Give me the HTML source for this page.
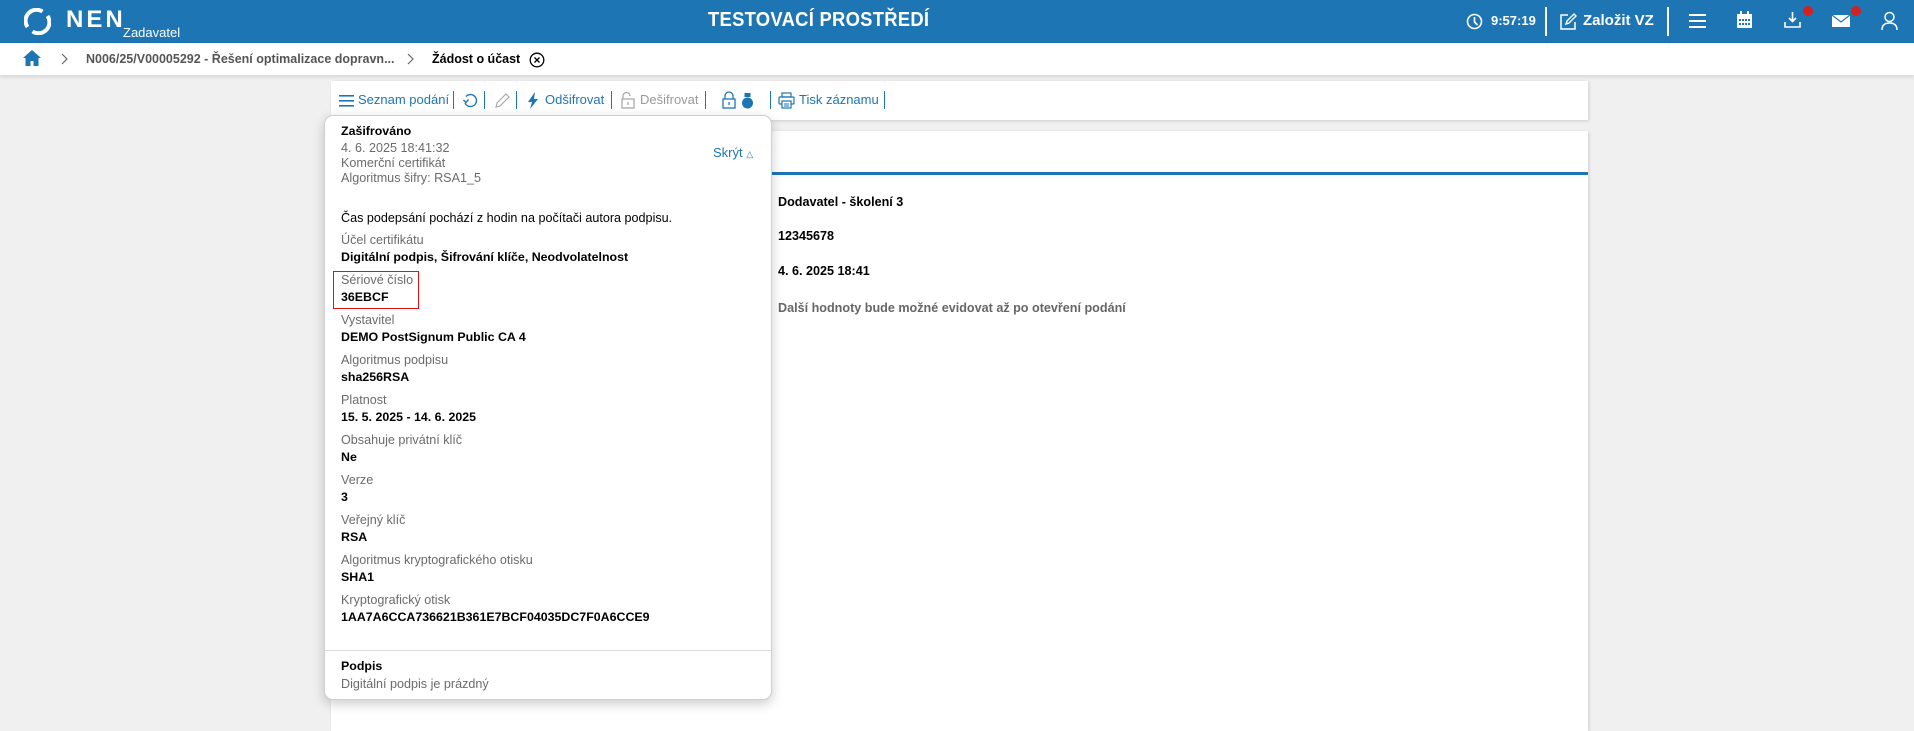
<!DOCTYPE html>
<html><head><meta charset="utf-8">
<style>
*{margin:0;padding:0;box-sizing:border-box}
body{width:1914px;height:722px;overflow:hidden;background:#f0f0f0;font-family:"Liberation Sans",sans-serif;position:relative;color:#000}
.a{position:absolute;white-space:nowrap}
.hdr{left:0;top:0;width:1914px;height:43px;background:#1e75b3}
.bc{left:0;top:43px;width:1914px;height:32px;background:#fff;box-shadow:0 2px 4px rgba(0,0,0,.12)}
.card{background:#fff;box-shadow:1px 1px 3px rgba(0,0,0,.15)}
.tb{font-size:13px;color:#1e75b3;top:92px}
.sep{width:1px;height:18px;background:#1e75b3;top:91px}
.pop{left:324px;top:115px;width:448px;height:585px;background:#fff;border:1px solid #cfcfcf;border-radius:9px;box-shadow:0 4px 12px rgba(0,0,0,.2)}
.l{font-size:12.6px;color:#6b6b6b;left:16px}
.v{font-size:12.4px;font-weight:bold;color:#000;left:16px}
.r{font-size:12.6px;font-weight:bold;left:778px}
</style></head><body>
<div class="a hdr"></div>
<svg class="a" style="left:24px;top:8px" width="27" height="27" viewBox="0 0 27 27"><path d="M18.5 3.5 A11 11 0 0 0 3.5 19" stroke="#fff" stroke-width="4" fill="none"/><path d="M8.5 23.5 A11 11 0 0 0 23.5 8" stroke="#fff" stroke-width="4" fill="none"/></svg>
<div class="a" style="left:66px;top:6px;font-size:24px;font-weight:bold;color:#fff;letter-spacing:3px">NEN</div>
<div class="a" style="left:123px;top:25px;font-size:13px;color:#fff">Zadavatel</div>
<div class="a" style="left:708px;top:9px;font-size:20px;font-weight:bold;color:#fff;letter-spacing:.3px;transform:scaleX(.92);transform-origin:left">TESTOVACÍ PROSTŘEDÍ</div>
<svg class="a" style="left:1466px;top:13px" width="17" height="17" viewBox="0 0 17 17"><circle cx="8.5" cy="8.5" r="7" stroke="#fff" stroke-width="1.6" fill="none"/><path d="M8.5 4v5l3 3" stroke="#fff" stroke-width="1.6" fill="none"/></svg>
<div class="a" style="left:1491px;top:13px;font-size:13px;font-weight:bold;color:#fff">9:57:19</div>
<div class="a" style="left:1545px;top:7px;width:2px;height:29px;background:#fff"></div>
<svg class="a" style="left:1559px;top:12px" width="19" height="19" viewBox="0 0 19 19"><path d="M9 3H2v14h14v-7" stroke="#fff" stroke-width="1.5" fill="none"/><path d="M7 12l1-3 7-7 2 2-7 7z" stroke="#fff" stroke-width="1.4" fill="none"/></svg>
<div class="a" style="left:1583px;top:12px;font-size:15px;font-weight:bold;color:#fff">Založit VZ</div>
<div class="a" style="left:1667px;top:7px;width:2px;height:29px;background:#fff"></div>
<svg class="a" style="left:1689px;top:13px" width="17" height="15"><rect y="1" width="17" height="2" fill="#fff"/><rect y="7" width="17" height="2" fill="#fff"/><rect y="13" width="17" height="2" fill="#fff"/></svg>
<svg class="a" style="left:1736px;top:11px" width="17" height="18" viewBox="0 0 17 18"><rect x="1" y="3" width="15" height="14" fill="#fff"/><rect x="4" y="0" width="2" height="5" fill="#fff"/><rect x="11" y="0" width="2" height="5" fill="#fff"/><g fill="#1e75b3"><rect x="3" y="8" width="2" height="2"/><rect x="6" y="8" width="2" height="2"/><rect x="9" y="8" width="2" height="2"/><rect x="12" y="8" width="2" height="2"/><rect x="3" y="12" width="2" height="2"/><rect x="6" y="12" width="2" height="2"/><rect x="9" y="12" width="2" height="2"/><rect x="12" y="12" width="2" height="2"/></g></svg>
<svg class="a" style="left:1784px;top:11px" width="17" height="18" viewBox="0 0 17 18"><path d="M8.5 1v9M5 7l3.5 3.5L12 7" stroke="#fff" stroke-width="1.6" fill="none"/><path d="M1 11v5h15v-5" stroke="#fff" stroke-width="1.6" fill="none"/></svg>
<div class="a" style="left:1803px;top:6px;width:10px;height:10px;border-radius:50%;background:#d32020"></div>
<svg class="a" style="left:1832px;top:15px" width="18" height="12" viewBox="0 0 18 12"><rect width="18" height="12" fill="#fff"/><path d="M0 0l9 7 9-7" stroke="#1e75b3" stroke-width="1.2" fill="none"/></svg>
<div class="a" style="left:1851px;top:6px;width:10px;height:10px;border-radius:50%;background:#d32020"></div>
<svg class="a" style="left:1881px;top:11px" width="17" height="19" viewBox="0 0 17 19"><circle cx="8.5" cy="6" r="4.5" stroke="#fff" stroke-width="1.5" fill="none"/><path d="M1 19c0-5 3-7 7.5-7s7.5 2 7.5 7" stroke="#fff" stroke-width="1.5" fill="none"/></svg>

<div class="a bc"></div>
<svg class="a" style="left:23px;top:50px" width="18" height="16" viewBox="0 0 18 16"><path d="M9 0L0 8h2.5v8h5v-5h3v5h5V8H18z" fill="#1e75b3"/></svg>
<svg class="a" style="left:61px;top:53px" width="7" height="12"><path d="M1 1l5 5-5 5" stroke="#666" stroke-width="1.2" fill="none"/></svg>
<div class="a" style="left:86px;top:52px;font-size:12.5px;font-weight:bold;color:#555">N006/25/V00005292 - Řešení optimalizace dopravn...</div>
<svg class="a" style="left:407px;top:53px" width="7" height="12"><path d="M1 1l5 5-5 5" stroke="#666" stroke-width="1.2" fill="none"/></svg>
<div class="a" style="left:432px;top:52px;font-size:12.5px;font-weight:bold">Žádost o účast</div>
<svg class="a" style="left:529px;top:52px" width="16" height="16" viewBox="0 0 16 16"><circle cx="8" cy="8" r="6.8" stroke="#000" stroke-width="1.3" fill="none"/><path d="M5.5 5.5l5 5M10.5 5.5l-5 5" stroke="#000" stroke-width="1.3"/></svg>

<div class="a card" style="left:331px;top:81px;width:1257px;height:39px"></div>
<div class="a card" style="left:331px;top:131px;width:1257px;height:600px"></div>
<div class="a" style="left:331px;top:172px;width:1257px;height:3px;background:#1e75b3"></div>

<svg class="a" style="left:339px;top:95px" width="15" height="12"><rect y="0" width="15" height="1.6" fill="#1e75b3"/><rect y="5" width="15" height="1.6" fill="#1e75b3"/><rect y="10" width="15" height="1.6" fill="#1e75b3"/></svg>
<div class="a tb" style="left:358px">Seznam podání</div>
<div class="a sep" style="left:453px"></div>
<svg class="a" style="left:462px;top:92px" width="17" height="17" viewBox="0 0 17 17"><path d="M4 4.5A6 6 0 1 1 3 11" stroke="#1e75b3" stroke-width="1.4" fill="none"/><path d="M1.5 8l2.5 2.5 2.5-3" stroke="#1e75b3" stroke-width="1.4" fill="none"/></svg>
<div class="a sep" style="left:484px"></div>
<svg class="a" style="left:494px;top:92px" width="17" height="17" viewBox="0 0 17 17"><path d="M2 15l1-4 9-9 3 3-9 9z" stroke="#aaa" stroke-width="1.2" fill="none"/></svg>
<div class="a sep" style="left:516px"></div>
<svg class="a" style="left:527px;top:92px" width="12" height="17" viewBox="0 0 12 17"><path d="M8 0L1 10h4l-2 7 8-10H7z" fill="#1e75b3"/></svg>
<div class="a tb" style="left:545px">Odšifrovat</div>
<div class="a sep" style="left:611px"></div>
<svg class="a" style="left:620px;top:91px" width="16" height="18" viewBox="0 0 16 18"><path d="M3 8V5a3.5 3.5 0 0 1 7 0" stroke="#aaa" stroke-width="1.3" fill="none"/><rect x="2" y="8" width="12" height="9" stroke="#aaa" stroke-width="1.3" fill="none"/><rect x="7.4" y="11" width="1.3" height="3" fill="#aaa"/></svg>
<div class="a tb" style="left:640px;color:#9a9a9a">Dešifrovat</div>
<div class="a sep" style="left:705px"></div>
<svg class="a" style="left:722px;top:91px" width="14" height="18" viewBox="0 0 14 18"><path d="M3 8V5a4 4 0 0 1 8 0v3" stroke="#1e75b3" stroke-width="1.3" fill="none"/><rect x="1" y="8" width="12" height="9" stroke="#1e75b3" stroke-width="1.3" fill="none"/><rect x="6.4" y="11" width="1.3" height="3" fill="#1e75b3"/></svg>
<svg class="a" style="left:742px;top:93px" width="11" height="16" viewBox="0 0 11 16"><rect x="2.5" y="0" width="6" height="4" fill="#1e75b3"/><circle cx="5.5" cy="10" r="5.5" fill="#1e75b3"/></svg>
<div class="a sep" style="left:770px"></div>
<svg class="a" style="left:778px;top:92px" width="17" height="17" viewBox="0 0 17 17"><rect x="4" y="1" width="9" height="4" stroke="#1e75b3" stroke-width="1.2" fill="none"/><rect x="1" y="5" width="15" height="7" rx="1" stroke="#1e75b3" stroke-width="1.2" fill="none"/><rect x="4" y="9" width="9" height="7" stroke="#1e75b3" stroke-width="1.2" fill="#fff"/><path d="M6 12h5M6 14h5" stroke="#1e75b3"/></svg>
<div class="a tb" style="left:799px">Tisk záznamu</div>
<div class="a sep" style="left:884px"></div>

<div class="a r" style="top:195px">Dodavatel - školení 3</div>
<div class="a r" style="top:229px">12345678</div>
<div class="a r" style="top:264px">4. 6. 2025 18:41</div>
<div class="a r" style="top:301px;color:#666">Další hodnoty bude možné evidovat až po otevření podání</div>

<div class="a pop">
<div class="a v" style="top:8px">Zašifrováno</div>
<div class="a l" style="top:25px">4. 6. 2025 18:41:32</div>
<div class="a l" style="top:40px">Komerční certifikát</div>
<div class="a l" style="top:55px">Algoritmus šifry: RSA1_5</div>
<div class="a" style="left:388px;top:29px;font-size:13px;color:#1e75b3">Skrýt <span style="font-size:9px">△</span></div>
<div class="a" style="left:16px;top:95px;font-size:12.6px">Čas podepsání pochází z hodin na počítači autora podpisu.</div>
<div class="a l" style="top:117px">Účel certifikátu</div>
<div class="a v" style="top:134px">Digitální podpis, Šifrování klíče, Neodvolatelnost</div>
<div class="a" style="left:8px;top:155px;width:86px;height:38px;border:1px solid #d11"></div>
<div class="a l" style="top:157px">Sériové číslo</div>
<div class="a v" style="top:174px">36EBCF</div>
<div class="a l" style="top:197px">Vystavitel</div>
<div class="a v" style="top:214px">DEMO PostSignum Public CA 4</div>
<div class="a l" style="top:237px">Algoritmus podpisu</div>
<div class="a v" style="top:254px">sha256RSA</div>
<div class="a l" style="top:277px">Platnost</div>
<div class="a v" style="top:294px">15. 5. 2025 - 14. 6. 2025</div>
<div class="a l" style="top:317px">Obsahuje privátní klíč</div>
<div class="a v" style="top:334px">Ne</div>
<div class="a l" style="top:357px">Verze</div>
<div class="a v" style="top:374px">3</div>
<div class="a l" style="top:397px">Veřejný klíč</div>
<div class="a v" style="top:414px">RSA</div>
<div class="a l" style="top:437px">Algoritmus kryptografického otisku</div>
<div class="a v" style="top:454px">SHA1</div>
<div class="a l" style="top:477px">Kryptografický otisk</div>
<div class="a v" style="top:494px">1AA7A6CCA736621B361E7BCF04035DC7F0A6CCE9</div>
<div class="a" style="left:0;top:534px;width:446px;height:1px;background:#ddd"></div>
<div class="a v" style="top:543px">Podpis</div>
<div class="a l" style="top:561px">Digitální podpis je prázdný</div>
</div>
</body></html>
